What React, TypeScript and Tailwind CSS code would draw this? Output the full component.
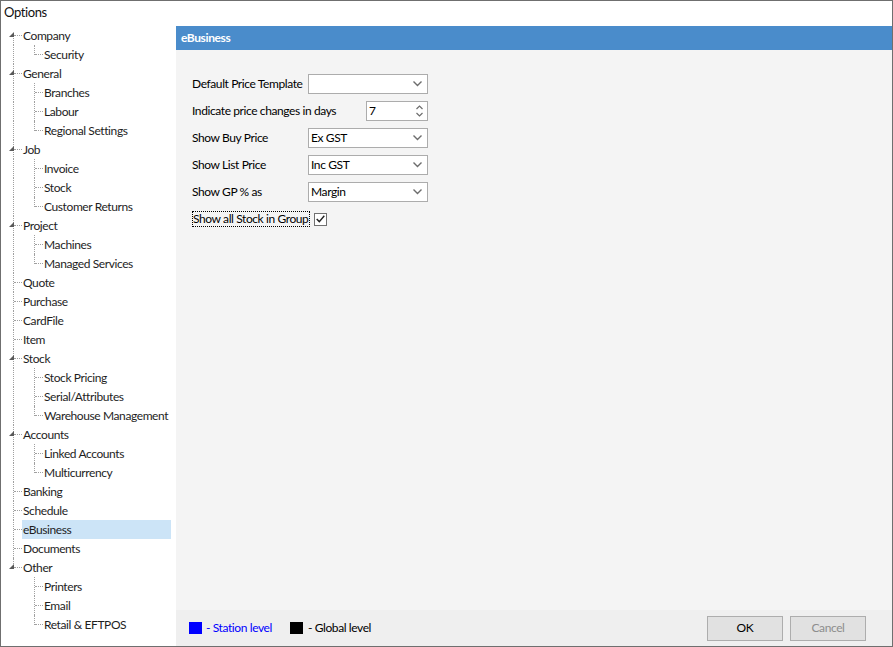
import React from 'react'

type Node = { label: string; children?: string[] }

const tree: Node[] = [
  { label: 'Company', children: ['Security'] },
  { label: 'General', children: ['Branches', 'Labour', 'Regional Settings'] },
  { label: 'Job', children: ['Invoice', 'Stock', 'Customer Returns'] },
  { label: 'Project', children: ['Machines', 'Managed Services'] },
  { label: 'Quote' },
  { label: 'Purchase' },
  { label: 'CardFile' },
  { label: 'Item' },
  { label: 'Stock', children: ['Stock Pricing', 'Serial/Attributes', 'Warehouse Management'] },
  { label: 'Accounts', children: ['Linked Accounts', 'Multicurrency'] },
  { label: 'Banking' },
  { label: 'Schedule' },
  { label: 'eBusiness' },
  { label: 'Documents' },
  { label: 'Other', children: ['Printers', 'Email', 'Retail & EFTPOS'] },
]

const dot = 'absolute border-dotted border-[#a0a0a0]'

function Expander() {
  return (
    <svg className="absolute left-[8px] top-[6px]" width="6" height="6" viewBox="0 0 6 6">
      <polygon points="5,0 5,5 0,5" fill="#595959" />
    </svg>
  )
}

function Chevron() {
  return (
    <svg width="9" height="6" viewBox="0 0 9 6">
      <polyline points="0.5,0.5 4.5,4.5 8.5,0.5" fill="none" stroke="#6d6d6d" strokeWidth="1.4" />
    </svg>
  )
}

function Select({ value }: { value: string }) {
  return (
    <div className="w-[120px] h-[20px] bg-white border border-[#acacac] flex items-center justify-between pl-[2px] pr-[5px]">
      <span>{value}</span>
      <Chevron />
    </div>
  )
}

function TreePanel() {
  const last = tree.length - 1
  return (
    <div className="w-[175px] bg-white text-[#1e1e1e] whitespace-nowrap">
      {tree.map((node, gi) => (
        <div key={node.label + gi}>
          <div className="relative h-[19px] flex items-center">
            <span
              className={`${dot} left-[12px] border-l ${gi === 0 ? 'top-[9px]' : 'top-0'} ${gi === last ? 'h-[10px]' : 'bottom-0'}`}
            />
            <span className={`${dot} left-[13px] top-[9px] w-[8px] border-t`} />
            {node.children && <Expander />}
            <span
              className={`ml-[21px] h-[19px] flex items-center pl-[1px] ${
                node.label === 'eBusiness' ? 'bg-[#cce4f7] w-[149px]' : ''
              }`}
            >
              {node.label}
            </span>
          </div>
          {node.children?.map((c, ci) => (
            <div key={c} className="relative h-[19px] flex items-center">
              {gi !== last && <span className={`${dot} left-[12px] top-0 bottom-0 border-l`} />}
              <span
                className={`${dot} left-[33px] border-l top-0 ${
                  ci === node.children!.length - 1 ? 'h-[10px]' : 'bottom-0'
                }`}
              />
              <span className={`${dot} left-[34px] top-[9px] w-[8px] border-t`} />
              <span className="ml-[43px]">{c}</span>
            </div>
          ))}
        </div>
      ))}
    </div>
  )
}

export default function App() {
  return (
    <div
      className="w-[893px] h-[647px] border border-[#6f6f6f] bg-white flex flex-col text-[12px] tracking-[-0.4px] text-black"
      style={{ fontFamily: 'Lato, "Liberation Sans", sans-serif' }}
    >
      <div className="h-[25px] pl-[3px] pt-[2px] text-[13px] text-[#111]">Options</div>
      <div className="flex flex-1 min-h-0">
        <TreePanel />
        <div className="flex-1 flex flex-col bg-[#f4f4f4]">
          <div className="h-[24px] bg-[#4a8ccb] text-white font-bold px-[5px] flex items-center">
            eBusiness
          </div>
          <div className="flex-1 pl-[16px] pt-[24px] whitespace-nowrap">
            <div className="grid grid-cols-[116px_120px] gap-y-[7px] auto-rows-[20px] items-center justify-start">
              <span>Default Price Template</span>
              <Select value="" />
              <span>Indicate price changes in days</span>
              <div className="flex justify-end">
                <div className="w-[62px] h-[20px] bg-white border border-[#acacac] flex items-center justify-between pl-[2px] pr-[4px]">
                  <span>7</span>
                  <svg width="7" height="12" viewBox="0 0 7 12">
                    <polyline points="0.5,4 3.5,1 6.5,4" fill="none" stroke="#6d6d6d" strokeWidth="1.2" />
                    <polyline points="0.5,8 3.5,11 6.5,8" fill="none" stroke="#6d6d6d" strokeWidth="1.2" />
                  </svg>
                </div>
              </div>
              <span>Show Buy Price</span>
              <Select value="Ex GST" />
              <span>Show List Price</span>
              <Select value="Inc GST" />
              <span>Show GP % as</span>
              <Select value="Margin" />
              <div className="col-span-2 flex items-center">
                <span className="border border-dotted border-black leading-[14px] pr-[1px]">
                  Show all Stock in Group
                </span>
                <span className="ml-[4px] w-[13px] h-[13px] bg-white border border-[#707070] flex items-center justify-center">
                  <svg width="9" height="8" viewBox="0 0 9 8">
                    <polyline points="0.7,4 3.3,6.6 8.3,0.8" fill="none" stroke="#222" strokeWidth="1.4" />
                  </svg>
                </span>
              </div>
            </div>
          </div>
          <div className="h-[36px] bg-[#efefef] flex items-center pl-[13px] pr-[26px]">
            <span className="w-[13px] h-[12px] bg-[#0000ff]" />
            <span className="ml-[4px] text-[#0000ff]">- Station level</span>
            <span className="ml-[18px] w-[13px] h-[12px] bg-black" />
            <span className="ml-[5px]">- Global level</span>
            <div className="ml-auto flex gap-[7px]">
              <button className="w-[76px] h-[25px] bg-[#e1e1e1] border border-[#adadad] text-black">OK</button>
              <button className="w-[76px] h-[25px] bg-[#e1e1e1] border border-[#adadad] text-[#8d8d8d]">
                Cancel
              </button>
            </div>
          </div>
        </div>
      </div>
    </div>
  )
}
